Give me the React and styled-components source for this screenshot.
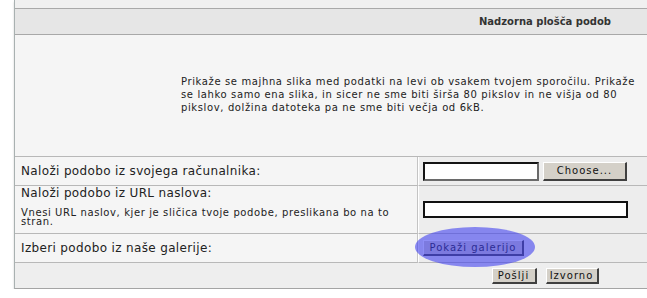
import React from "react";
import styled, { createGlobalStyle } from "styled-components";

const GlobalStyle = createGlobalStyle`
  body {
    margin: 0;
    background: #ffffff;
    overflow: hidden;
    font-family: "DejaVu Sans", Verdana, sans-serif;
  }
`;

const Page = styled.div`
  padding-left: 14px;
  width: 1200px;
`;

const Panel = styled.div`
  width: 1060px;
  border-left: 1px solid #a9b1b1;
  background: #efefef;
  box-shadow: 0 2px 2px rgba(0, 0, 0, 0.18);
  border-bottom: 1px solid #a4a4a4;
`;

const TopStrip = styled.div`
  height: 8px;
  background: #f0f0f0;
`;

const Header = styled.div`
  height: 25px;
  border-top: 1px solid #a9a9a9;
  border-bottom: 1px solid #a8a8a8;
  background: #e6e6e6;
  display: flex;
  align-items: center;
  justify-content: center;
  font-size: 10px;
  font-weight: bold;
  color: #333;
`;

const Intro = styled.div`
  height: 121px;
  background: #f5f5f5;
  box-sizing: border-box;
  padding: 40px 0 0 166px;
`;

const IntroText = styled.p`
  margin: 0;
  width: 462px;
  font-size: 10px;
  letter-spacing: 0.62px;
  line-height: 13px;
  color: #222;
`;

const Form = styled.div`
  display: grid;
  grid-template-columns: 403px 1fr;
  border-top: 1px solid #b8b8b8;
`;

const LabelCell = styled.div`
  background: #f5f5f5;
  border-bottom: 1px solid #b8b8b8;
  border-right: 1px solid #c4c4c4;
  padding: 0 6px;
  height: ${(p) => p.$h}px;
  box-sizing: border-box;
  display: flex;
  flex-direction: column;
  justify-content: ${(p) => (p.$top ? "flex-start" : "center")};
  color: #222;
`;

const Label = styled.span`
  font-size: 12px;
  letter-spacing: 0.35px;
  line-height: 14px;
`;

const Hint = styled.span`
  font-size: 10px;
  letter-spacing: 0.6px;
  line-height: 9px;
  margin-top: 8px;
`;

const FieldCell = styled.div`
  position: relative;
  background: #ededed;
  border-bottom: 1px solid #b8b8b8;
  border-left: 1px solid #ffffff;
  height: ${(p) => p.$h}px;
  box-sizing: border-box;
  padding-left: 4px;
  display: flex;
  align-items: center;
`;

const FileBox = styled.div`
  display: flex;
  gap: 4px;
  align-items: center;
`;

const TextBox = styled.input`
  box-sizing: border-box;
  width: ${(p) => p.$w}px;
  height: ${(p) => p.$hh}px;
  border: ${(p) => (p.$inset ? "2px inset #6a6a6a" : "2px solid #111")};
  background: #fff;
  padding: 0;
  margin: 0;
`;

const Button = styled.button`
  box-sizing: border-box;
  height: ${(p) => p.$hh || 15}px;
  width: ${(p) => p.$w}px;
  padding: 0;
  margin: 0;
  background: #d4d0c8;
  border-style: solid;
  border-width: 1px 2px 2px 1px;
  border-color: #ffffff #404040 #404040 #ffffff;
  font-family: "DejaVu Sans", Verdana, sans-serif;
  font-size: 10px;
  letter-spacing: 1px;
  color: #111;
  position: relative;
  z-index: 0;
`;

const Highlight = styled.div`
  position: absolute;
  left: -4px;
  top: -7px;
  width: 120px;
  height: 40px;
  border-radius: 50%;
  background: rgba(60, 60, 240, 0.58);
  pointer-events: none;
  z-index: 1;
`;

const Footer = styled.div`
  height: 25px;
  background: #eeeeee;
  display: flex;
  align-items: center;
  justify-content: center;
  gap: 9px;
`;

function App() {
  return (
    <Page>
      <GlobalStyle />
      <Panel>
        <TopStrip />
        <Header>Nadzorna plošča podob</Header>
        <Intro>
          <IntroText>
            Prikaže se majhna slika med podatki na levi ob vsakem tvojem sporočilu.
            Prikaže se lahko samo ena slika, in sicer ne sme biti širša 80 pikslov in
            ne višja od 80 pikslov, dolžina datoteka pa ne sme biti večja od 6kB.
          </IntroText>
        </Intro>
        <Form>
          <LabelCell $h={29}>
            <Label>Naloži podobo iz svojega računalnika:</Label>
          </LabelCell>
          <FieldCell $h={29}>
            <FileBox>
              <TextBox $w={116} $hh={19} $inset readOnly />
              <Button $w={84} $hh={19}>Choose...</Button>
            </FileBox>
          </FieldCell>

          <LabelCell $h={48} $top>
            <Label>Naloži podobo iz URL naslova:</Label>
            <Hint>
              Vnesi URL naslov, kjer je sličica tvoje podobe, preslikana bo na to stran.
            </Hint>
          </LabelCell>
          <FieldCell $h={48}>
            <TextBox $w={205} $hh={17} readOnly />
          </FieldCell>

          <LabelCell $h={29}>
            <Label>Izberi podobo iz naše galerije:</Label>
          </LabelCell>
          <FieldCell $h={29}>
            <Button $w={101} $hh={16}>Pokaži galerijo</Button>
            <Highlight />
          </FieldCell>
        </Form>
        <Footer>
          <Button $w={45} $hh={16}>Pošlji</Button>
          <Button $w={53} $hh={16}>Izvorno</Button>
        </Footer>
      </Panel>
    </Page>
  );
}

export default App;
